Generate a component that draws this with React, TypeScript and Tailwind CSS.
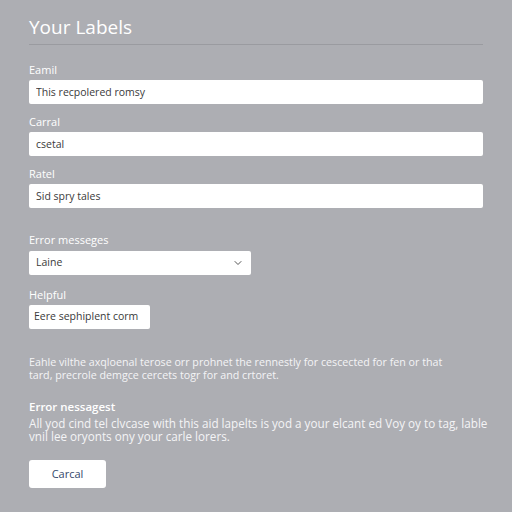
import { ChevronDown } from "lucide-react";

function Field({ label, value }: { label: string; value: string }) {
	return (
		<div className="flex flex-col">
			<label className="text-[11px] font-medium leading-[14px] text-white">{label}</label>
			<input
				readOnly
				value={value}
				className="mt-[3px] h-6 w-full rounded-[2px] bg-white px-[7px] text-[10.5px] text-[#3a3a3a] outline-none"
			/>
		</div>
	);
}

export default function App() {
	return (
		<div
			className="min-h-[512px] w-[512px] bg-[#adaeb3] px-[29px] pt-[14px]"
			style={{ fontFamily: '"Open Sans", "Noto Sans", sans-serif' }}
		>
			<h1 className="text-[19px] leading-[26px] text-white">Your Labels</h1>
			<div className="mt-[4px] h-px w-full bg-[#9a9ba0]" />

			<div className="mt-[18px] flex flex-col gap-[11px]">
				<Field label="Eamil" value="This recpolered romsy" />
				<Field label="Carral" value="csetal" />
				<Field label="Ratel" value="Sid spry tales" />
			</div>

			<div className="mt-[25px] flex flex-col">
				<label className="text-[11px] font-medium leading-[14px] text-white">Error messeges</label>
				<div className="mt-[4px] flex h-6 w-[222px] items-center justify-between rounded-[2px] bg-white px-[7px] text-[10.5px] text-[#3a3a3a]">
					<span>Laine</span>
					<ChevronDown className="h-3 w-3 text-[#555]" strokeWidth={2} />
				</div>
			</div>

			<div className="mt-[13px] flex flex-col">
				<label className="text-[11px] font-medium leading-[14px] text-white">Helpful</label>
				<div className="mt-[3px] flex h-6 w-[121px] items-center rounded-[2px] bg-white px-[5px] text-[10.5px] text-[#3a3a3a]">
					Eere sephiplent corm
				</div>
			</div>

			<p className="mt-[27px] w-[432px] text-[10.7px] leading-[13px] text-[#f4f4f6]">
				Eahle vilthe axqloenal terose orr prohnet the rennestly for cescected for fen or that
				tard, precrole demgce cercets togr for and crtoret.
			</p>

			<div className="mt-[18px]">
				<h2 className="text-[11.5px] font-semibold leading-[14px] text-white">Error nessagest</h2>
				<p className="mt-[3px] w-[462px] text-[11.7px] leading-[13px] text-[#f4f4f6]">
					All yod cind tel clvcase with this aid lapelts is yod a your elcant ed Voy oy to tag, lable
					vnil lee oryonts ony your carle lorers.
				</p>
			</div>

			<button className="mt-[17px] h-[28px] w-[77px] rounded-[3px] bg-white text-[11px] text-[#34486b]">
				Carcal
			</button>
		</div>
	);
}
